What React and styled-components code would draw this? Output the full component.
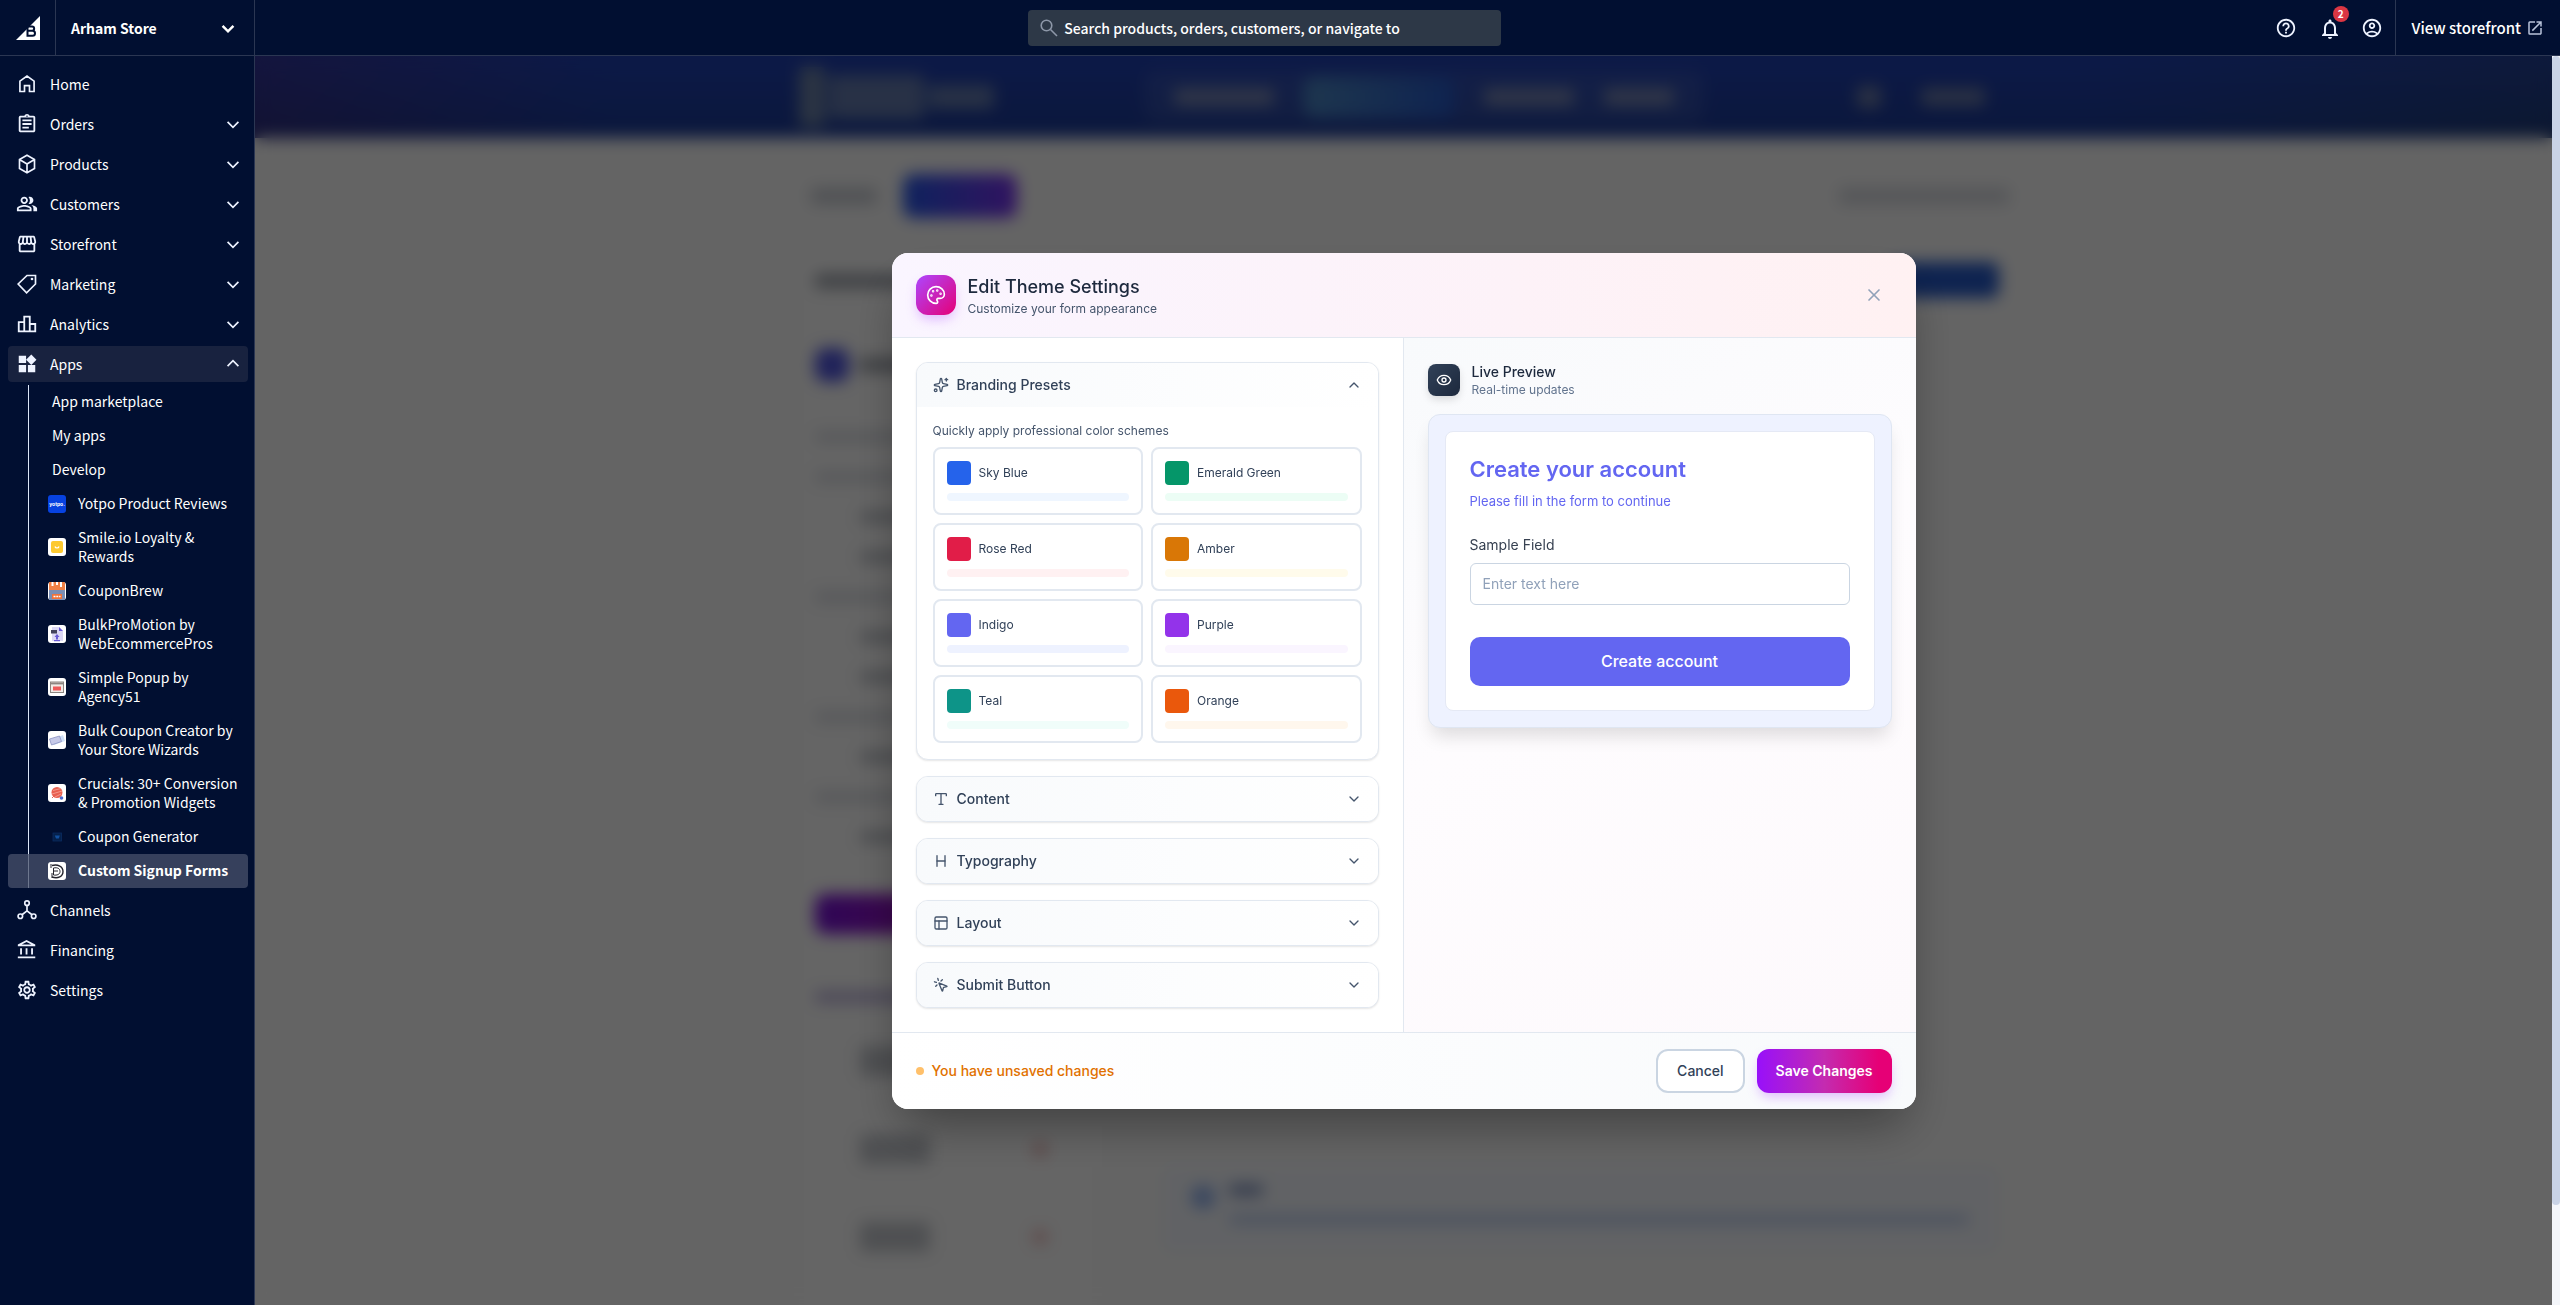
import React, { useState } from "react";
import styled, { createGlobalStyle, css } from "styled-components";
import {
  MdOutlineAssignment,
  MdOutlinePeopleAlt,
  MdOutlineStorefront,
  MdOutlineLeaderboard,
  MdWidgets,
  MdOutlineAccountBalance,
  MdOutlineSettings,
  MdHelpOutline,
  MdNotificationsNone,
  MdOutlineAccountCircle,
  MdOpenInNew,
} from "react-icons/md";
import {
  Palette,
  X,
  Sparkles,
  Type,
  Heading,
  PanelsTopLeft,
  MousePointerClick,
  Eye,
  ChevronDown,
  ChevronUp,
} from "lucide-react";

const navFont = `"Noto Sans CJK SC", "Noto Sans", sans-serif`;
const appFont = `Inter, "Liberation Sans", sans-serif`;

const GlobalStyle = createGlobalStyle`
  *, *::before, *::after { box-sizing: border-box; }
  body { margin: 0; background: #031033; font-family: ${appFont}; }
  button, input { font: inherit; color: inherit; }
  h1, h2, h3, p, ul { margin: 0; padding: 0; }
  ul { list-style: none; }
  a { color: inherit; text-decoration: none; }
`;

/* ---------- Shell ---------- */

const Shell = styled.div`
  display: grid;
  grid-template-columns: 255px minmax(0, 1fr);
  grid-template-rows: 56px minmax(0, 1fr);
  height: 100vh;
  background: #010f31;
`;

const TopBar = styled.header`
  grid-column: 1 / -1;
  display: flex;
  align-items: stretch;
  border-bottom: 1px solid #2b3652;
  color: #fff;
  font-family: ${navFont};
`;

const LogoCell = styled.a`
  display: grid;
  place-items: center;
  width: 56px;
  border-right: 1px solid #2b3652;
`;

const StoreSwitcher = styled.button`
  display: flex;
  align-items: center;
  justify-content: space-between;
  width: 199px;
  padding: 0 16px 0 15px;
  border: 0;
  border-right: 1px solid #2b3652;
  background: none;
  font-size: 14px;
  font-weight: 700;
`;

const SearchArea = styled.div`
  flex: 1;
  display: flex;
  justify-content: center;
  align-items: center;
`;

const SearchBox = styled.label`
  display: flex;
  align-items: center;
  gap: 6px;
  width: 473px;
  height: 36px;
  padding: 0 12px;
  border-radius: 4px;
  background: #2d3847;

  input {
    flex: 1;
    min-width: 0;
    padding: 0;
    border: 0;
    outline: 0;
    background: none;
    font-size: 14px;
    font-weight: 500;
  }
  input::placeholder { color: #fff; opacity: 1; }
`;

const TopActions = styled.div`
  display: flex;
  align-items: center;
  gap: 21px;
  padding-right: 12px;
  border-right: 1px solid #2b3652;
`;

const IconButton = styled.button`
  position: relative;
  display: grid;
  place-items: center;
  width: 22px;
  height: 22px;
  padding: 0;
  border: 0;
  background: none;
  color: #eef3ff;
`;

const CountBadge = styled.span`
  position: absolute;
  top: -11px;
  right: -9px;
  width: 16px;
  height: 16px;
  border-radius: 50%;
  background: #db3643;
  color: #fff;
  font-size: 10px;
  font-weight: 700;
  line-height: 16px;
  text-align: center;
`;

const StorefrontLink = styled.a`
  display: flex;
  align-items: center;
  gap: 5px;
  padding: 0 16px;
  font-size: 15px;
  font-weight: 500;
  svg { color: #b9c4da; }
`;

/* ---------- Sidebar ---------- */

const Sidebar = styled.nav`
  padding: 10px 6px 0 8px;
  border-right: 1px solid #2b3652;
  color: #fff;
  font-family: ${navFont};
  font-weight: 400;
`;

const NavList = styled.ul`
  display: flex;
  flex-direction: column;
  gap: 4px;
`;

const NavItem = styled.a`
  display: flex;
  align-items: center;
  gap: 12px;
  height: 36px;
  padding: 0 5px 0 8px;
  border-radius: 4px;
  font-size: 14px;
  background: ${(p) => (p.$open ? "#18223f" : "transparent")};

  svg { flex: none; color: #eef3ff; }
`;

const NavIcon = styled.span`
  display: grid;
  place-items: center;
  width: 22px;
`;

const NavLabel = styled.span`
  flex: 1;
`;

const SubList = styled.ul`
  margin-top: 3px;
  background: linear-gradient(#dce6f7, #dce6f7) 20px 0 / 1px 100% no-repeat;
`;

const SubItem = styled.a`
  display: flex;
  align-items: center;
  gap: 12px;
  padding: 7px 0 8px ${(p) => (p.$plain ? "44px" : "40px")};
  border-radius: 4px;
  font-size: 14px;
  line-height: 19px;
  ${(p) =>
    p.$active &&
    css`
      background: rgba(72, 82, 107, 0.75);
      font-weight: 700;
    `}
`;

/* ---------- Dimmed app page ---------- */

const Main = styled.main`
  position: relative;
  display: flex;
  overflow: hidden;
  background: #fafafa;
`;

const AppPage = styled.div`
  flex: 1;
  min-width: 0;
`;

const Centered = styled.div`
  display: flex;
  align-items: center;
  width: 100%;
  max-width: 1210px;
  margin: 0 auto;
`;

const AppHeader = styled.div`
  display: flex;
  height: 82px;
  background: linear-gradient(180deg, rgba(34, 66, 190, 0.5), rgba(24, 52, 130, 0.5)),
    linear-gradient(90deg, #43297a, #1e3fa8 15%, #1e3fa8 80%, #24406e);
`;

const Blob = styled.div`
  flex: none;
  width: ${(p) => p.$w}px;
  height: ${(p) => p.$h || 12}px;
  border-radius: ${(p) => p.$r || 4}px;
  background: ${(p) => p.$c || "#c6cad2"};
`;

const HeaderLogo = styled.div`
  display: flex;
  align-items: center;
  gap: 4px;
  width: 345px;
`;

const HeaderTabs = styled.div`
  display: flex;
  align-items: center;
  gap: 30px;
  height: 52px;
  padding: 0 30px;
  border-radius: 12px;
  background: rgba(255, 255, 255, 0.08);
`;

const HeaderEnd = styled.div`
  display: flex;
  align-items: center;
  gap: 40px;
  margin-left: auto;
  padding: 0 24px;
`;

const Toolbar = styled(Centered)`
  justify-content: space-between;
  height: 116px;
  padding-left: 12px;
`;

const ToolbarGroup = styled.div`
  display: flex;
  align-items: center;
  gap: 26px;
`;

const Workspace = styled(Centered)`
  align-items: stretch;
  gap: 40px;
`;

const FieldPanel = styled.div`
  display: flex;
  flex-direction: column;
  gap: 30px;
  width: 308px;
  height: 1200px;
  padding: 20px 20px 20px 16px;
  border-radius: 16px;
  background: #fcfcfc;
`;

const FieldRow = styled.div`
  display: flex;
  align-items: center;
  gap: 10px;
  padding-left: ${(p) => (p.$deep ? "45px" : "0")};
`;

const SectionRow = styled(FieldRow)`
  padding: 30px 0 20px;
`;

const FieldGroup = styled.div`
  display: flex;
  flex-direction: column;
  gap: ${(p) => p.$gap}px;
  padding-top: ${(p) => p.$top}px;
`;

const CanvasPanel = styled.div`
  flex: 1;
  display: flex;
  flex-direction: column;
  justify-content: space-between;
  height: 1030px;
  padding: 8px 10px 30px 24px;
`;

const CanvasTop = styled.div`
  display: flex;
  justify-content: flex-end;
`;

const TipCard = styled.div`
  display: flex;
  gap: 14px;
  padding: 20px 30px 30px;
  border-radius: 12px;
  background: #f3f6fc;
`;

const TipText = styled.div`
  display: flex;
  flex-direction: column;
  gap: 20px;
`;

const ScrollTrack = styled.div`
  width: 8px;
  background: #f4f6fa;
`;

const ScrollThumb = styled.div`
  height: 92%;
  border-radius: 4px;
  background: #c9d3e6;
`;

const Overlay = styled.div`
  position: absolute;
  inset: 0 8px 0 0;
  display: flex;
  align-items: center;
  justify-content: center;
  padding: 24px;
  background: rgba(0, 0, 0, 0.6);
  backdrop-filter: blur(8px);
`;

/* ---------- Modal ---------- */

const Modal = styled.section`
  display: flex;
  flex-direction: column;
  width: 100%;
  max-width: 1024px;
  overflow: hidden;
  border-radius: 16px;
  background: #fff;
  color: #1d293d;
  box-shadow: 0 25px 50px -12px rgba(0, 0, 0, 0.4);
`;

const ModalHeader = styled.header`
  display: flex;
  align-items: center;
  gap: 12px;
  height: 85px;
  padding: 0 24px;
  border-bottom: 1px solid #e2e8f0;
  background: linear-gradient(90deg, #faf5ff, #fdf2f8 60%, #fff1f2);
`;

const HeaderIcon = styled.span`
  display: grid;
  place-items: center;
  width: 40px;
  height: 40px;
  border-radius: 12px;
  background: linear-gradient(135deg, #ad46ff, #e60076);
  color: #fff;
  box-shadow: 0 6px 12px -2px rgba(173, 70, 255, 0.35);
`;

const TitleBlock = styled.div`
  flex: 1;
`;

const ModalTitle = styled.h1`
  font-size: 18px;
  font-weight: 500;
  line-height: 28px;
`;

const Caption = styled.p`
  color: ${(p) => (p.$soft ? "#62748e" : "#45556c")};
  font-size: 12px;
  line-height: 16px;
`;

const CloseButton = styled.button`
  display: grid;
  place-items: center;
  width: 36px;
  height: 36px;
  padding: 0;
  border: 0;
  border-radius: 8px;
  background: none;
  color: #90a1b9;
`;

const ModalBody = styled.div`
  display: grid;
  grid-template-columns: 1fr 1fr;
`;

const SettingsPane = styled.div`
  display: flex;
  flex-direction: column;
  gap: 16px;
  padding: 24px;
  border-right: 1px solid #e2e8f0;
`;

const Panel = styled.section`
  overflow: hidden;
  border: 1px solid #e2e8f0;
  border-radius: 12px;
  background: #fff;
  box-shadow: 0 1px 2px rgba(0, 0, 0, 0.1);
`;

const PanelToggle = styled.button`
  display: flex;
  align-items: center;
  gap: 8px;
  width: 100%;
  height: 44px;
  padding: 0 16px;
  border: 0;
  background: linear-gradient(90deg, #f8fafc, #fff);
  color: #314158;
  font-size: 14px;
  font-weight: 500;
  line-height: 20px;
  text-align: left;

  span { flex: 1; }
  svg { color: #45556c; }
`;

const PanelContent = styled.div`
  display: flex;
  flex-direction: column;
  gap: 8px;
  padding: 16px;
`;

const PresetGrid = styled.div`
  display: grid;
  grid-template-columns: 1fr 1fr;
  gap: 8px;
`;

const PresetCard = styled.button`
  display: grid;
  gap: 8px;
  padding: 12px;
  border: 2px solid #e2e8f0;
  border-radius: 8px;
  background: #fff;
  color: #314158;
  font-size: 12px;
  line-height: 16px;
  text-align: left;
`;

const PresetHead = styled.span`
  display: flex;
  align-items: center;
  gap: 8px;
`;

const Swatch = styled.span`
  width: 24px;
  height: 24px;
  border-radius: 4px;
  background: ${(p) => p.$color};
`;

const Tint = styled.span`
  height: 8px;
  border-radius: 4px;
  background: ${(p) => p.$color};
`;

const PreviewPane = styled.div`
  display: flex;
  flex-direction: column;
  gap: 16px;
  padding: 24px;
  background: linear-gradient(150deg, #f8fafc, #fefcfe 45%, #fdf9fc);
`;

const PreviewHead = styled.div`
  display: flex;
  align-items: center;
  gap: 12px;
`;

const PreviewIcon = styled.span`
  display: grid;
  place-items: center;
  width: 32px;
  height: 32px;
  border-radius: 8px;
  background: linear-gradient(135deg, #314158, #1d293d);
  color: #fff;
  box-shadow: 0 4px 8px -1px rgba(0, 0, 0, 0.15);
`;

const PreviewTitle = styled.h2`
  font-size: 14px;
  font-weight: 500;
  line-height: 20px;
`;

const PreviewStage = styled.div`
  padding: 16px;
  border: 1px solid #dfe6f2;
  border-radius: 12px;
  background: #eef2ff;
  box-shadow: 0 12px 18px -4px rgba(0, 0, 0, 0.13);
`;

const FormCard = styled.form`
  display: flex;
  flex-direction: column;
  padding: 24px;
  border: 1px solid #e5e9f5;
  border-radius: 8px;
  background: #fff;
`;

const FormTitle = styled.h3`
  color: #6366f1;
  font-size: 22px;
  font-weight: 600;
  line-height: 27px;
`;

const FormIntro = styled.p`
  margin-top: 8px;
  color: #6366f1;
  font-size: 13px;
  line-height: 20px;
`;

const FieldLabel = styled.label`
  margin: 24px 0 8px;
  color: #374151;
  font-size: 14px;
  line-height: 20px;
`;

const TextInput = styled.input`
  width: 100%;
  height: 42px;
  padding: 0 12px;
  border: 1px solid #cad5e2;
  border-radius: 6px;
  background: #fff;
  font-size: 14px;
  &::placeholder { color: #90a1b9; opacity: 1; }
`;

const SubmitButton = styled.button`
  height: 49px;
  margin-top: 32px;
  border: 0;
  border-radius: 10px;
  background: #6366f1;
  color: #fff;
  font-size: 16px;
  font-weight: 500;
`;

const ModalFooter = styled.footer`
  display: flex;
  align-items: center;
  gap: 12px;
  padding: 16px 24px;
  border-top: 1px solid #e2e8f0;
  background: linear-gradient(90deg, #fff, #f8fafc);
`;

const UnsavedNote = styled.p`
  flex: 1;
  display: flex;
  align-items: center;
  gap: 8px;
  color: #e17100;
  font-size: 14px;
  font-weight: 500;
`;

const Dot = styled.span`
  width: 8px;
  height: 8px;
  border-radius: 50%;
  background: #ffc06a;
`;

const FooterButton = styled.button`
  height: 44px;
  padding: 0 19px;
  border-radius: 12px;
  font-size: 14px;
  font-weight: 500;
  ${(p) =>
    p.$primary
      ? css`
          border: 0;
          background: linear-gradient(90deg, #9810fa, #c42bb0 50%, #e60076 90%);
          color: #fff;
          font-weight: 600;
          box-shadow: 0 6px 12px -2px rgba(173, 70, 255, 0.35);
        `
      : css`
          border: 2px solid #cad5e2;
          background: #fff;
          color: #314158;
        `}
`;

/* ---------- Drawings ---------- */

const Stroke = ({ size = 20, width = 2, children }) => (
  <svg width={size} height={size} viewBox="0 0 24 24" fill="none" stroke="currentColor" strokeWidth={width}>
    {children}
  </svg>
);

const Caret = ({ up, width = 2 }) => (
  <Stroke size={20} width={width}>
    <path d={up ? "M5.5 14.5 12 8l6.5 6.5" : "M5.5 9.5 12 16l6.5-6.5"} />
  </Stroke>
);

const HomeIcon = () => (
  <Stroke>
    <path d="M3.500 21V8.500L12 2.500l8.500 6V21h-5.500v-7h-6v7z" />
  </Stroke>
);

const BoxIcon = () => (
  <Stroke>
    <path d="M12 1.500 21 6.500v11L12 22.500 3 17.500v-11zM3.500 7 12 12l8.500-5M12 12v10" />
  </Stroke>
);

const TagIcon = () => (
  <Stroke>
    <path d="M12 1.800h10.200V12L11.500 22.600 1.400 12z" />
    <circle cx="18" cy="6" r="1.600" fill="currentColor" stroke="none" />
  </Stroke>
);

const ChannelsIcon = () => (
  <Stroke>
    <circle cx="12" cy="3.800" r="2.700" />
    <circle cx="4" cy="19.500" r="2.700" />
    <circle cx="20" cy="19.500" r="2.700" />
    <path d="M12 6.500V13l-6 4.700M12 13l6 4.700" />
  </Stroke>
);

const SearchIcon = () => (
  <svg width="18" height="18" viewBox="0 0 18 18" fill="none" stroke="#8d97a8" strokeWidth="1.600">
    <circle cx="6.500" cy="6.500" r="5.300" />
    <path d="M10.500 10.500 17 17" />
  </svg>
);

const BrandMark = () => (
  <svg width="24" height="24" viewBox="0 0 24 24">
    <path d="M24 0v24H0z" fill="#fff" />
    <g fill="none" stroke="#010f31" strokeWidth="2">
      <path d="M11.500 10.500h4.500a2 2 0 0 1 0 4.300h-4.500zM11.500 14.800h5a2.300 2.300 0 0 1 0 5h-5z" />
    </g>
  </svg>
);

const TileSvg = styled.svg`
  flex: none;
`;

const Tile = ({ bg = "#fff", children }) => (
  <TileSvg width="18" height="18" viewBox="0 0 18 18">
    <rect width="18" height="18" rx="3" fill={bg} />
    {children}
  </TileSvg>
);

const tiles = {
  yotpo: (
    <Tile bg="#0742e0">
      <text x="9" y="11" fill="#fff" fontSize="5" fontWeight="700" textAnchor="middle" fontFamily="Inter, sans-serif">
        yotpo.
      </text>
    </Tile>
  ),
  smile: (
    <Tile>
      <rect x="3" y="3" width="12" height="12" rx="2" fill="#fdc92f" />
      <path d="M7 8.500c.5 2 3.500 2 4 0" fill="none" stroke="#fff" strokeWidth="1.200" />
    </Tile>
  ),
  brew: (
    <Tile>
      <path d="M1 0h16v8H1z" fill="#f08146" />
      <path d="M3.500 0h2v4h-2zM8 0h2v3H8zM12 0h2v5h-2z" fill="#fff" />
      <path d="M1 8h16v10H1z" fill="#7b8eb4" />
      <rect x="4" y="12" width="10" height="5" fill="#f0733a" />
      <path d="M5.500 14.500h7" stroke="#fff" strokeWidth="1.500" strokeDasharray="2 .8" />
    </Tile>
  ),
  bulk: (
    <Tile>
      <path d="M4 2h7l4 4v10H4z" fill="#dcd8f5" />
      <path d="M11 2l4 4h-4z" fill="#6a5bd6" />
      <rect x="3" y="5" width="6" height="3.500" fill="#43435c" />
      <path d="M9 9l2.500 3H10v2.500H8V12H6.500zM6 15h6v1.300H6z" fill="#6a5bd6" />
    </Tile>
  ),
  popup: (
    <Tile>
      <rect x="2.500" y="4" width="13" height="10.500" fill="#f1ebe6" stroke="#8b8580" />
      <path d="M2.500 5.500h13" stroke="#8b8580" strokeWidth="1.800" />
      <rect x="5" y="8.500" width="8" height="4" fill="#ec5a5a" />
    </Tile>
  ),
  coupon: (
    <Tile>
      <path d="M3 9l12-5 2 6-11 4z" fill="#cfe0f7" />
      <path d="M1.500 8l10-3 2 5.500-10 3.500z" fill="#c6c9e8" stroke="#8a90c2" strokeWidth=".8" />
    </Tile>
  ),
  crucials: (
    <Tile>
      <circle cx="9" cy="8.500" r="5.500" fill="#e8604f" />
      <path d="M5 6.500l8-2M4 10l10-3M7 13l6-3" stroke="#f6a79c" strokeWidth=".8" />
      <circle cx="13.500" cy="14" r="1.800" fill="#4a6ad0" />
      <path d="M4 14l2-2" stroke="#e8604f" />
    </Tile>
  ),
  generator: (
    <Tile bg="none">
      <rect x="5" y="5" width="8.500" height="8" fill="#05204a" stroke="#0a2c60" strokeWidth=".8" />
      <path d="M6.800 7.500h5l-1 3H8z" fill="#12509f" />
    </Tile>
  ),
  forms: (
    <Tile>
      <path d="M4 3.500c6-1.500 11 1 11 6s-5 7.500-11 5.500" fill="none" stroke="#23232c" strokeWidth="1.400" />
      <path d="M5.500 6c4-.8 6.500.5 6.500 3.500s-3 4-6.500 3.500V6M3 2v4M6 9h4M4 11v5" fill="none" stroke="#23232c" />
    </Tile>
  ),
};

/* ---------- Data ---------- */

const primaryNav = [
  { label: "Home", icon: <HomeIcon /> },
  { label: "Orders", icon: <MdOutlineAssignment size={22} />, more: true },
  { label: "Products", icon: <BoxIcon />, more: true },
  { label: "Customers", icon: <MdOutlinePeopleAlt size={22} />, more: true },
  { label: "Storefront", icon: <MdOutlineStorefront size={22} />, more: true },
  { label: "Marketing", icon: <TagIcon />, more: true },
  { label: "Analytics", icon: <MdOutlineLeaderboard size={22} />, more: true },
];

const secondaryNav = [
  { label: "Channels", icon: <ChannelsIcon /> },
  { label: "Financing", icon: <MdOutlineAccountBalance size={22} /> },
  { label: "Settings", icon: <MdOutlineSettings size={22} /> },
];

const appLinks = [
  { label: "App marketplace" },
  { label: "My apps" },
  { label: "Develop" },
  { label: "Yotpo Product Reviews", tile: "yotpo" },
  { label: "Smile.io Loyalty & Rewards", tile: "smile" },
  { label: "CouponBrew", tile: "brew" },
  { label: "BulkProMotion by WebEcommercePros", tile: "bulk" },
  { label: "Simple Popup by Agency51", tile: "popup" },
  { label: "Bulk Coupon Creator by Your Store Wizards", tile: "coupon" },
  { label: "Crucials: 30+ Conversion & Promotion Widgets", tile: "crucials" },
  { label: "Coupon Generator", tile: "generator" },
  { label: "Custom Signup Forms", tile: "forms", active: true },
];

const presets = [
  { name: "Sky Blue", color: "#2563eb", tint: "#eff6ff" },
  { name: "Emerald Green", color: "#059669", tint: "#ecfdf5" },
  { name: "Rose Red", color: "#e11d48", tint: "#fff1f2" },
  { name: "Amber", color: "#d97706", tint: "#fffbeb" },
  { name: "Indigo", color: "#6366f1", tint: "#eef2ff" },
  { name: "Purple", color: "#9333ea", tint: "#faf5ff" },
  { name: "Teal", color: "#0d9488", tint: "#f0fdfa" },
  { name: "Orange", color: "#ea580c", tint: "#fff7ed" },
];

const panels = [
  { id: "presets", label: "Branding Presets", Icon: Sparkles },
  { id: "content", label: "Content", Icon: Type },
  { id: "type", label: "Typography", Icon: Heading },
  { id: "layout", label: "Layout", Icon: PanelsTopLeft },
  { id: "submit", label: "Submit Button", Icon: MousePointerClick },
];

/* ---------- Sections ---------- */

const NavEntry = ({ label, icon, more, open }) => (
  <NavItem href="#" $open={open}>
    <NavIcon>{icon}</NavIcon>
    <NavLabel>{label}</NavLabel>
    {(more || open) && <Caret up={open} />}
  </NavItem>
);

const SideNav = () => (
  <Sidebar aria-label="Main">
    <NavList>
      {primaryNav.map((n) => (
        <li key={n.label}>
          <NavEntry {...n} />
        </li>
      ))}
      <li>
        <NavEntry label="Apps" icon={<MdWidgets size={22} />} open />
        <SubList>
          {appLinks.map((a) => (
            <li key={a.label}>
              <SubItem href="#" $plain={!a.tile} $active={a.active}>
                {a.tile && tiles[a.tile]}
                <span>{a.label}</span>
              </SubItem>
            </li>
          ))}
        </SubList>
      </li>
      {secondaryNav.map((n) => (
        <li key={n.label}>
          <NavEntry {...n} />
        </li>
      ))}
    </NavList>
  </Sidebar>
);

const fieldRows = [0, 0, 1, 1, 0, 1, 1, 0, 1, 0, 1];

const BackgroundPage = () => (
  <AppPage aria-hidden="true">
    <AppHeader>
      <Centered>
        <HeaderLogo>
          <Blob $w={26} $h={60} $c="#6d83a8" />
          <Blob $w={95} $h={44} $c="#647bae" />
          <Blob $w={66} $h={24} $c="#647bae" />
        </HeaderLogo>
        <HeaderTabs>
          <Blob $w={100} $h={16} $c="#7f8cb4" />
          <Blob $w={150} $h={40} $r={10} $c="linear-gradient(90deg, #4b88c4, #2558c8)" />
          <Blob $w={90} $h={16} $c="#7f8cb4" />
          <Blob $w={70} $h={16} $c="#7f8cb4" />
        </HeaderTabs>
        <HeaderEnd>
          <Blob $w={24} $h={22} $c="#6b7ba8" />
          <Blob $w={64} $h={18} $c="#6b7ba8" />
        </HeaderEnd>
      </Centered>
    </AppHeader>
    <Toolbar>
      <ToolbarGroup>
        <Blob $w={66} $h={16} />
        <Blob $w={114} $h={44} $r={10} $c="linear-gradient(90deg, #2457e8, #7a30f0)" />
      </ToolbarGroup>
      <Blob $w={170} $h={16} $c="#d3d6dd" />
    </Toolbar>
    <Workspace>
      <FieldPanel>
        <Blob $w={120} $h={14} $c="#9a9fa8" />
        <SectionRow>
          <Blob $w={34} $h={34} $r={10} $c="#4f55e0" />
          <Blob $w={120} $h={14} $c="#9a9fa8" />
        </SectionRow>
        {fieldRows.map((deep, i) => (
          <FieldRow key={i} $deep={deep}>
            <Blob $w={deep ? 110 : 90} $h={10} $c={deep ? "#b4b8c0" : "#d4d7de"} />
          </FieldRow>
        ))}
        <FieldGroup $gap={58} $top={22}>
          <Blob $w={240} $h={40} $r={10} $c="linear-gradient(90deg, #7610d8, #c0128e)" />
          <Blob $w={120} $h={10} $c="#b3a8d8" />
        </FieldGroup>
        <FieldGroup $gap={58} $top={14}>
          {[0, 1, 2, 3].map((i) => (
            <FieldRow key={i} $deep>
              <Blob $w={70} $h={30} $c="#c4c7cd" />
              <Blob $w={84} $h={4} $c="#fcfcfc" />
              <Blob $w={12} $h={12} $c="#e8a0a0" />
            </FieldRow>
          ))}
        </FieldGroup>
      </FieldPanel>
      <CanvasPanel>
        <CanvasTop>
          <Blob $w={110} $h={36} $r={8} $c="#2458c8" />
        </CanvasTop>
        <TipCard>
          <Blob $w={24} $h={24} $r={12} $c="#8fb0ee" />
          <TipText>
            <Blob $w={34} $h={10} $c="#7085b8" />
            <Blob $w={740} $h={9} $c="#b4c7ec" />
          </TipText>
        </TipCard>
      </CanvasPanel>
    </Workspace>
  </AppPage>
);

const Presets = ({ onPick }) => (
  <PanelContent>
    <Caption>Quickly apply professional color schemes</Caption>
    <PresetGrid>
      {presets.map((p) => (
        <PresetCard key={p.name} type="button" onClick={() => onPick(p)}>
          <PresetHead>
            <Swatch $color={p.color} />
            {p.name}
          </PresetHead>
          <Tint $color={p.tint} />
        </PresetCard>
      ))}
    </PresetGrid>
  </PanelContent>
);

const ThemeModal = () => {
  const [open, setOpen] = useState("presets");
  const [theme, setTheme] = useState(presets[4]);

  return (
    <Modal role="dialog" aria-label="Edit Theme Settings">
      <ModalHeader>
        <HeaderIcon>
          <Palette size={20} />
        </HeaderIcon>
        <TitleBlock>
          <ModalTitle>Edit Theme Settings</ModalTitle>
          <Caption>Customize your form appearance</Caption>
        </TitleBlock>
        <CloseButton type="button" aria-label="Close">
          <X size={20} />
        </CloseButton>
      </ModalHeader>

      <ModalBody>
        <SettingsPane>
          {panels.map(({ id, label, Icon }) => (
            <Panel key={id}>
              <PanelToggle
                type="button"
                aria-expanded={open === id}
                onClick={() => setOpen(open === id ? "" : id)}
              >
                <Icon size={16} />
                <span>{label}</span>
                {open === id ? <ChevronUp size={16} /> : <ChevronDown size={16} />}
              </PanelToggle>
              {id === "presets" && open === id && <Presets onPick={setTheme} />}
            </Panel>
          ))}
        </SettingsPane>

        <PreviewPane>
          <PreviewHead>
            <PreviewIcon>
              <Eye size={16} />
            </PreviewIcon>
            <div>
              <PreviewTitle>Live Preview</PreviewTitle>
              <Caption $soft>Real-time updates</Caption>
            </div>
          </PreviewHead>
          <PreviewStage style={{ background: theme.tint }}>
            <FormCard onSubmit={(e) => e.preventDefault()}>
              <FormTitle style={{ color: theme.color }}>Create your account</FormTitle>
              <FormIntro style={{ color: theme.color }}>Please fill in the form to continue</FormIntro>
              <FieldLabel htmlFor="sample">Sample Field</FieldLabel>
              <TextInput id="sample" placeholder="Enter text here" />
              <SubmitButton style={{ background: theme.color }}>Create account</SubmitButton>
            </FormCard>
          </PreviewStage>
        </PreviewPane>
      </ModalBody>

      <ModalFooter>
        <UnsavedNote>
          <Dot />
          You have unsaved changes
        </UnsavedNote>
        <FooterButton type="button">Cancel</FooterButton>
        <FooterButton type="button" $primary>
          Save Changes
        </FooterButton>
      </ModalFooter>
    </Modal>
  );
};

export default function App() {
  return (
    <>
      <GlobalStyle />
      <Shell>
        <TopBar>
          <LogoCell href="#" aria-label="Dashboard">
            <BrandMark />
          </LogoCell>
          <StoreSwitcher type="button">
            Arham Store
            <Caret width={3} />
          </StoreSwitcher>
          <SearchArea>
            <SearchBox>
              <SearchIcon />
              <input
                type="search"
                aria-label="Search"
                placeholder="Search products, orders, customers, or navigate to"
              />
            </SearchBox>
          </SearchArea>
          <TopActions>
            <IconButton type="button" aria-label="Help">
              <MdHelpOutline size={22} />
            </IconButton>
            <IconButton type="button" aria-label="Notifications">
              <MdNotificationsNone size={24} />
              <CountBadge>2</CountBadge>
            </IconButton>
            <IconButton type="button" aria-label="Account">
              <MdOutlineAccountCircle size={22} />
            </IconButton>
          </TopActions>
          <StorefrontLink href="#">
            View storefront
            <MdOpenInNew size={18} />
          </StorefrontLink>
        </TopBar>

        <SideNav />

        <Main>
          <BackgroundPage />
          <ScrollTrack>
            <ScrollThumb />
          </ScrollTrack>
          <Overlay>
            <ThemeModal />
          </Overlay>
        </Main>
      </Shell>
    </>
  );
}
